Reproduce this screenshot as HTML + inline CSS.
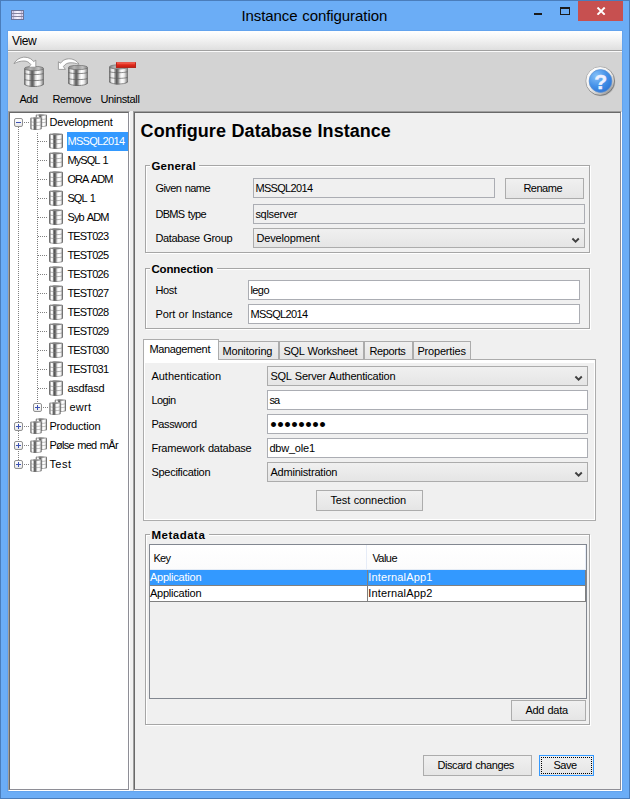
<!DOCTYPE html>
<html><head><meta charset="utf-8"><title>Instance configuration</title>
<style>
*{box-sizing:border-box;margin:0;padding:0}
html,body{width:630px;height:799px;overflow:hidden;background:#6badf6}
body{position:relative;font-family:"Liberation Sans",sans-serif;font-size:11px;color:#000;line-height:13px}
.a{position:absolute}
.t{position:absolute;white-space:nowrap;height:13px;line-height:13px}
.b{font-weight:bold}
/* window frame */
#frame{left:0;top:0;width:630px;height:799px;background:#6badf6;border:1px solid #4a7dbb}
#close{left:578px;top:1px;width:45px;height:20px;background:#c75050}
#client{left:8px;top:31px;width:614px;height:760px;background:#f0f0f0;outline:1px solid #62a3ee}
#menu{left:8px;top:31px;width:614px;height:19px;background:linear-gradient(#fff,#f4f4f4 40%,#dfdfdf)}
#menul1{left:8px;top:50px;width:614px;height:1px;background:#a0a0a0}
#menul2{left:8px;top:51px;width:614px;height:1px;background:#fafafa}
#tool{left:8px;top:52px;width:614px;height:59px;background:#d3d3d3}
/* panels */
.sunk{border-style:solid;border-width:1px;border-color:#a0a0a0 #fff #fff #a0a0a0}
.sunk>i{position:absolute;left:0;top:0;right:0;bottom:0;border-style:solid;border-width:1px;border-color:#696969 #8e8e96 #8e8e96 #696969}
#tree{left:8px;top:111px;width:122px;height:680px;background:#fff}
#right{left:133px;top:111px;width:489px;height:680px;background:#f0f0f0}
/* group boxes */
.gb{position:absolute;border:1px solid #a6a6a6}
/* fields */
.tx{position:absolute;height:20px;border:1px solid #abadb3;background:#fff;padding:3px 0 0 2px;white-space:nowrap;line-height:13px}
.ro{background:#f0f0f0}
.cb{position:absolute;height:20px;border:1px solid #acacac;background:linear-gradient(#f0f0f0,#e5e5e5);padding:3px 0 0 3px;white-space:nowrap;line-height:13px}
.cb svg{position:absolute;right:4px;top:8px}
.btn{position:absolute;height:21px;border:1px solid #acacac;background:linear-gradient(#f0f0f0,#e5e5e5);text-align:center;line-height:13px;padding-top:3px;white-space:nowrap}
.tab{position:absolute;top:341px;height:18px;border:1px solid #acacac;border-bottom:none;background:linear-gradient(#f0f0f0,#e5e5e5);text-align:center;line-height:13px;padding-top:3px;white-space:nowrap}
/* tree */
.hd{position:absolute;height:1px;background-image:linear-gradient(90deg,#808080 50%,transparent 50%);background-size:2px 1px}
.vd{position:absolute;width:1px;background-image:linear-gradient(#808080 50%,transparent 50%);background-size:1px 2px}
.pm{position:absolute;width:9px;height:9px;border:1px solid #919191;border-radius:2px;background:linear-gradient(#fff,#e8e8e8)}
.pm:before{content:"";position:absolute;left:1px;top:3px;width:5px;height:1px;background:#3d52b4}
.pm.p:after{content:"";position:absolute;left:3px;top:1px;width:1px;height:5px;background:#3d52b4}
</style></head><body>
<svg width="0" height="0" style="position:absolute"><defs>
<linearGradient id="cyl" x1="0" x2="1" y1="0" y2="0">
<stop offset="0" stop-color="#6a6a6a"/><stop offset="0.05" stop-color="#747474"/><stop offset="0.11" stop-color="#b4b4b4"/><stop offset="0.17" stop-color="#ffffff"/><stop offset="0.25" stop-color="#f2f2f2"/><stop offset="0.31" stop-color="#8e8e8e"/><stop offset="0.39" stop-color="#545454"/><stop offset="0.46" stop-color="#6e6e6e"/><stop offset="0.54" stop-color="#b4b4b4"/><stop offset="0.62" stop-color="#f4f4f4"/><stop offset="0.7" stop-color="#ffffff"/><stop offset="0.84" stop-color="#f2f2f2"/><stop offset="0.9" stop-color="#bcbcbc"/><stop offset="0.95" stop-color="#767676"/><stop offset="1" stop-color="#6a6a6a"/>
</linearGradient>
<linearGradient id="cyltop" x1="0" x2="0" y1="0" y2="1"><stop offset="0" stop-color="#9a9a9a"/><stop offset="1" stop-color="#787878"/></linearGradient>
<symbol id="db" viewBox="0 0 14 16">
<path d="M0 2 C0 0.9 0.8 0.7 1.5 0.5 H12.5 C13.2 0.7 14 0.9 14 2 V14 C14 15.2 11 16 7 16 C3 16 0 15.2 0 14 Z" fill="url(#cyl)"/>
<path d="M0.4 1.2 C2 0 12 0 13.6 1.2 C12 2.5 2 2.5 0.4 1.2 Z" fill="url(#cyltop)"/>
<path d="M1 5.9 C3 6.9 11 6.9 13 5.9 M1 9.9 C3 10.9 11 10.9 13 9.9" fill="none" stroke="#7c7c7c" stroke-width="0.8" opacity="0.7"/>
<path d="M0.5 13.6 C0.5 14.9 3.5 15.5 7 15.5 C10.5 15.5 13.5 14.9 13.5 13.6" fill="none" stroke="#7a7a7a" stroke-width="0.9" opacity="0.8"/>
</symbol>
<linearGradient id="lid" x1="0" x2="1" y1="0" y2="0"><stop offset="0" stop-color="#808080"/><stop offset="0.3" stop-color="#b4b4b4"/><stop offset="0.5" stop-color="#9a9a9a"/><stop offset="0.75" stop-color="#c4c4c4"/><stop offset="1" stop-color="#808080"/></linearGradient>
<linearGradient id="cylL" x1="0" x2="1" y1="0" y2="0"><stop offset="0" stop-color="#6c6c6c"/><stop offset="0.05" stop-color="#858585"/><stop offset="0.13" stop-color="#e2e2e2"/><stop offset="0.23" stop-color="#f6f6f6"/><stop offset="0.31" stop-color="#a2a2a2"/><stop offset="0.4" stop-color="#5a5a5a"/><stop offset="0.48" stop-color="#808080"/><stop offset="0.58" stop-color="#dedede"/><stop offset="0.68" stop-color="#ffffff"/><stop offset="0.8" stop-color="#ececec"/><stop offset="0.91" stop-color="#a6a6a6"/><stop offset="1" stop-color="#6c6c6c"/></linearGradient>
<symbol id="dbL" viewBox="0 0 20 21">
<path d="M0 2.6 V17.8 C0 19.7 4.5 21 10 21 C15.5 21 20 19.7 20 17.8 V2.6 Z" fill="url(#cylL)"/>
<ellipse cx="10" cy="2.5" rx="9.7" ry="2.2" fill="url(#lid)" stroke="#6c6c6c" stroke-width="0.7"/>
<path d="M0.6 7.6 C4 8.9 16 8.9 19.4 7.6 M0.6 13.6 C4 14.9 16 14.9 19.4 13.6" fill="none" stroke="#5e5e5e" stroke-width="0.9" opacity="0.8"/>
<path d="M0.5 17.6 C0.5 19.5 5 20.5 10 20.5 C15 20.5 19.5 19.5 19.5 17.6" fill="none" stroke="#6a6a6a" stroke-width="1" opacity="0.85"/>
</symbol>
<symbol id="dbs" viewBox="0 0 18 16">
<use href="#db" x="5.3" y="0" width="12" height="13"/>
<use href="#db" x="0" y="3" width="12" height="13"/>
</symbol>
</defs></svg>
<div class="a" id="frame"></div>
<div class="a" id="close"></div>
<div class="a" id="client"></div>
<div class="a" id="menu"></div><div class="a" id="menul1"></div><div class="a" id="menul2"></div>
<div class="a" id="tool"></div>

<!-- title icon -->
<svg class="a" style="left:11px;top:10px" width="13" height="10" viewBox="0 0 13 10"><defs><linearGradient id="ticon" x1="0" x2="1"><stop offset="0" stop-color="#cdc8ec"/><stop offset="0.5" stop-color="#f6f3ff"/><stop offset="1" stop-color="#d4cff0"/></linearGradient></defs><rect x="0" y="0" width="13" height="10" fill="#6b7499"/><rect x="1" y="1" width="11" height="8" fill="url(#ticon)"/><path d="M2.5 1V9M10.5 1V9" stroke="#a9a5c6" stroke-width="1" opacity="0.7"/><path d="M1 3.5H12M1 6.5H12" stroke="#85849f" stroke-width="1"/></svg>
<!-- caption buttons -->
<div class="a" style="left:534px;top:13px;width:8px;height:2px;background:#1b1b1b"></div>
<div class="a" style="left:560px;top:7px;width:10px;height:8px;border:1px solid #1b1b1b;border-top-width:2px"></div>
<svg class="a" style="left:596px;top:7px" width="10" height="8" viewBox="0 0 10 8"><path d="M1.5 0.5L8.7 7.7M8.7 0.5L1.5 7.7" stroke="#fff" stroke-width="1.9" fill="none"/></svg>
<!-- toolbar -->
<svg class="a" style="left:24px;top:66px" width="20" height="21"><use href="#dbL" width="20" height="21"/></svg>
<svg class="a" style="left:13px;top:56px" width="25" height="13" viewBox="0 0 25 13"><path d="M1 7.6 C3 3.5 8 1 12 1.2 C16 1.4 19 3 20.6 5.6 L22.8 4.2 L22.8 11.2 L15.8 11.2 L17.8 8.6 C16 6.2 14 5 11 5 C7 5 4 6 1 7.6 Z" fill="#fff" stroke="#8a8a8a" stroke-width="0.8"/></svg>
<svg class="a" style="left:68px;top:65px" width="20" height="21"><use href="#dbL" width="20" height="21"/></svg>
<svg class="a" style="left:57px;top:58px" width="25" height="13" viewBox="0 0 25 13"><path d="M22 6.4 C20 2.3 15 0.6 11.5 0.8 C8 1 5.2 2.6 3.6 5.2 L1.4 3.8 L1.4 11.4 L8.4 11.4 L6.4 8.6 C8 6.2 10 5 13 4.8 C16 4.6 19 5.2 22 6.4 Z" fill="#fff" stroke="#8a8a8a" stroke-width="0.8"/></svg>
<svg class="a" style="left:109px;top:64px" width="19" height="21"><use href="#dbL" width="19" height="21"/></svg>
<div class="a" style="left:116px;top:62px;width:20px;height:6px;background:linear-gradient(#f4604f,#e02a1c 45%,#c91f13);border:1px solid #b3261b;border-top-color:#e8574a"></div>
<!-- help -->
<svg class="a" style="left:584px;top:64px" width="33" height="34" viewBox="0 0 33 34"><defs>
<radialGradient id="hb" cx="0.32" cy="0.28" r="0.85"><stop offset="0" stop-color="#86c0f8"/><stop offset="0.55" stop-color="#4290e8"/><stop offset="1" stop-color="#2a6fd2"/></radialGradient>
<linearGradient id="hr" x1="0.15" y1="0.1" x2="0.85" y2="0.95"><stop offset="0" stop-color="#ffffff"/><stop offset="0.5" stop-color="#ececec"/><stop offset="0.8" stop-color="#bdbdbd"/><stop offset="1" stop-color="#858585"/></linearGradient>
<linearGradient id="hs" x1="0.15" y1="0.1" x2="0.85" y2="0.95"><stop offset="0" stop-color="#b4b4b4"/><stop offset="1" stop-color="#6e6e6e"/></linearGradient></defs>
<circle cx="17" cy="18" r="14.3" fill="#000" opacity="0.10"/>
<circle cx="16.2" cy="17" r="14.4" fill="url(#hr)" stroke="url(#hs)" stroke-width="0.9"/>
<circle cx="16.5" cy="17" r="11.4" fill="url(#hb)" stroke="#5b8fd0" stroke-width="0.7"/>
<text x="16.6" y="24.6" text-anchor="middle" font-family="Liberation Sans, sans-serif" font-weight="bold" font-size="21" fill="#eef0ff" stroke="#eef0ff" stroke-width="0.5">?</text></svg>
<div class="a sunk" id="tree"><i></i></div>
<div class="a sunk" id="right"><i></i></div>
<div class="t" style="left:241.40px;top:7px;font-size:15px;height:17px;line-height:17px;letter-spacing:-0.07px;word-spacing:0.60px;">Instance configuration</div>
<div class="t" style="left:12.00px;top:34px;font-size:12px;height:14px;line-height:14px;letter-spacing:-0.38px;">View</div>
<div class="t" style="left:19.40px;top:93px;letter-spacing:-0.48px;">Add</div>
<div class="t" style="left:52.40px;top:93px;letter-spacing:-0.37px;">Remove</div>
<div class="t" style="left:100.40px;top:93px;letter-spacing:-0.34px;">Uninstall</div>
<div class="vd" style="left:18px;top:127px;height:338px"></div>
<div class="vd" style="left:37px;top:133px;height:270px"></div>
<div class="hd" style="left:24px;top:122px;width:6px"></div>
<div class="pm" style="left:14px;top:118px"></div>
<svg class="a" style="left:30px;top:114px" width="18" height="16"><use href="#dbs" width="18" height="16"/></svg>
<div class="t" style="left:49.40px;top:116px;letter-spacing:-0.13px;">Development</div>
<div class="hd" style="left:38px;top:141px;width:10px"></div>
<svg class="a" style="left:49px;top:133px" width="14" height="16"><use href="#db" width="14" height="16"/></svg>
<div class="a" style="left:67px;top:132px;width:61px;height:19px;background:#3399ff"></div>
<div class="t" style="left:67.40px;top:135px;letter-spacing:-0.67px;color:#fff;">MSSQL2014</div>
<div class="hd" style="left:38px;top:160px;width:10px"></div>
<svg class="a" style="left:49px;top:152px" width="14" height="16"><use href="#db" width="14" height="16"/></svg>
<div class="t" style="left:67.40px;top:154px;letter-spacing:-0.90px;word-spacing:1.29px;">MySQL 1</div>
<div class="hd" style="left:38px;top:179px;width:10px"></div>
<svg class="a" style="left:49px;top:171px" width="14" height="16"><use href="#db" width="14" height="16"/></svg>
<div class="t" style="left:67.40px;top:173px;letter-spacing:-0.90px;word-spacing:1.29px;">ORA ADM</div>
<div class="hd" style="left:38px;top:198px;width:10px"></div>
<svg class="a" style="left:49px;top:190px" width="14" height="16"><use href="#db" width="14" height="16"/></svg>
<div class="t" style="left:67.40px;top:192px;letter-spacing:-0.90px;word-spacing:1.29px;">SQL 1</div>
<div class="hd" style="left:38px;top:217px;width:10px"></div>
<svg class="a" style="left:49px;top:209px" width="14" height="16"><use href="#db" width="14" height="16"/></svg>
<div class="t" style="left:67.40px;top:211px;letter-spacing:-0.84px;word-spacing:1.22px;">Syb ADM</div>
<div class="hd" style="left:38px;top:236px;width:10px"></div>
<svg class="a" style="left:49px;top:228px" width="14" height="16"><use href="#db" width="14" height="16"/></svg>
<div class="t" style="left:67.40px;top:230px;letter-spacing:-0.81px;">TEST023</div>
<div class="hd" style="left:38px;top:255px;width:10px"></div>
<svg class="a" style="left:49px;top:247px" width="14" height="16"><use href="#db" width="14" height="16"/></svg>
<div class="t" style="left:67.40px;top:249px;letter-spacing:-0.81px;">TEST025</div>
<div class="hd" style="left:38px;top:274px;width:10px"></div>
<svg class="a" style="left:49px;top:266px" width="14" height="16"><use href="#db" width="14" height="16"/></svg>
<div class="t" style="left:67.40px;top:268px;letter-spacing:-0.81px;">TEST026</div>
<div class="hd" style="left:38px;top:293px;width:10px"></div>
<svg class="a" style="left:49px;top:285px" width="14" height="16"><use href="#db" width="14" height="16"/></svg>
<div class="t" style="left:67.40px;top:287px;letter-spacing:-0.81px;">TEST027</div>
<div class="hd" style="left:38px;top:312px;width:10px"></div>
<svg class="a" style="left:49px;top:304px" width="14" height="16"><use href="#db" width="14" height="16"/></svg>
<div class="t" style="left:67.40px;top:306px;letter-spacing:-0.81px;">TEST028</div>
<div class="hd" style="left:38px;top:331px;width:10px"></div>
<svg class="a" style="left:49px;top:323px" width="14" height="16"><use href="#db" width="14" height="16"/></svg>
<div class="t" style="left:67.40px;top:325px;letter-spacing:-0.81px;">TEST029</div>
<div class="hd" style="left:38px;top:350px;width:10px"></div>
<svg class="a" style="left:49px;top:342px" width="14" height="16"><use href="#db" width="14" height="16"/></svg>
<div class="t" style="left:67.40px;top:344px;letter-spacing:-0.81px;">TEST030</div>
<div class="hd" style="left:38px;top:369px;width:10px"></div>
<svg class="a" style="left:49px;top:361px" width="14" height="16"><use href="#db" width="14" height="16"/></svg>
<div class="t" style="left:67.40px;top:363px;letter-spacing:-0.81px;">TEST031</div>
<div class="hd" style="left:38px;top:388px;width:10px"></div>
<svg class="a" style="left:49px;top:380px" width="14" height="16"><use href="#db" width="14" height="16"/></svg>
<div class="t" style="left:67.40px;top:382px;letter-spacing:-0.23px;">asdfasd</div>
<div class="hd" style="left:43px;top:407px;width:6px"></div>
<div class="pm p" style="left:33px;top:403px"></div>
<svg class="a" style="left:49px;top:399px" width="18" height="16"><use href="#dbs" width="18" height="16"/></svg>
<div class="t" style="left:69.40px;top:401px;letter-spacing:0.26px;">ewrt</div>
<div class="hd" style="left:24px;top:426px;width:6px"></div>
<div class="pm p" style="left:14px;top:422px"></div>
<svg class="a" style="left:30px;top:418px" width="18" height="16"><use href="#dbs" width="18" height="16"/></svg>
<div class="t" style="left:49.40px;top:420px;letter-spacing:-0.16px;">Production</div>
<div class="hd" style="left:24px;top:445px;width:6px"></div>
<div class="pm p" style="left:14px;top:441px"></div>
<svg class="a" style="left:30px;top:437px" width="18" height="16"><use href="#dbs" width="18" height="16"/></svg>
<div class="t" style="left:49.40px;top:439px;letter-spacing:-0.74px;word-spacing:1.12px;">Pølse med mÅr</div>
<div class="hd" style="left:24px;top:464px;width:6px"></div>
<div class="pm p" style="left:14px;top:460px"></div>
<svg class="a" style="left:30px;top:456px" width="18" height="16"><use href="#dbs" width="18" height="16"/></svg>
<div class="t" style="left:49.40px;top:458px;letter-spacing:0.46px;">Test</div>
<div class="t b" style="left:140.60px;top:121px;font-size:18px;height:20px;line-height:20px;letter-spacing:0.04px;word-spacing:0.59px;">Configure Database Instance</div>
<div class="gb" style="left:146px;top:166px;width:445px;height:88px;border-color:#fff"></div><div class="gb" style="left:145px;top:165px;width:445px;height:88px"></div><div class="a" style="left:150px;top:159px;width:49px;height:13px;background:#f0f0f0"></div><div class="t b" style="left:151.40px;top:160px;font-size:11.5px;height:13.5px;line-height:13.5px;letter-spacing:0.23px;">General</div>
<div class="t" style="left:155.40px;top:182px;letter-spacing:-0.57px;word-spacing:0.96px;">Given name</div>
<div class="t" style="left:155.40px;top:208px;letter-spacing:-0.70px;word-spacing:1.08px;">DBMS type</div>
<div class="t" style="left:155.40px;top:232px;letter-spacing:-0.33px;word-spacing:0.72px;">Database Group</div>
<div class="tx ro" style="left:253px;top:178px;width:242px"></div><div class="t" style="left:255.40px;top:182px;letter-spacing:-0.67px;">MSSQL2014</div>
<div class="btn" style="left:505px;top:178px;width:79px"></div><div class="t" style="left:523.40px;top:182px;letter-spacing:-0.49px;">Rename</div>
<div class="tx ro" style="left:253px;top:204px;width:332px"></div><div class="t" style="left:255.40px;top:208px;letter-spacing:-0.31px;">sqlserver</div>
<div class="cb" style="left:253px;top:228px;width:332px"><svg width="9" height="7" viewBox="0 0 9 7"><path d="M1.4 1.5L4.6 4.7L7.8 1.5" fill="none" stroke="#404040" stroke-width="1.9"/></svg></div><div class="t" style="left:256.40px;top:232px;letter-spacing:-0.13px;">Development</div>
<div class="gb" style="left:146px;top:269px;width:445px;height:61px;border-color:#fff"></div><div class="gb" style="left:145px;top:268px;width:445px;height:61px"></div><div class="a" style="left:150px;top:262px;width:67px;height:13px;background:#f0f0f0"></div><div class="t b" style="left:151.40px;top:263px;font-size:11.5px;height:13.5px;line-height:13.5px;letter-spacing:-0.14px;">Connection</div>
<div class="t" style="left:155.40px;top:284px;letter-spacing:-0.35px;">Host</div>
<div class="t" style="left:155.40px;top:308px;letter-spacing:-0.10px;word-spacing:0.49px;">Port or Instance</div>
<div class="tx" style="left:248px;top:280px;width:332px"></div><div class="t" style="left:250.40px;top:284px;letter-spacing:-0.56px;">lego</div>
<div class="tx" style="left:248px;top:304px;width:332px"></div><div class="t" style="left:250.40px;top:308px;letter-spacing:-0.67px;">MSSQL2014</div>
<div class="a" style="left:143px;top:359px;width:453px;height:162px;border:1px solid #acacac;background:#fff"></div>
<div class="a" style="left:145px;top:363px;width:449px;height:156px;background:#f0f0f0"></div>
<div class="tab" style="left:218px;width:61px"></div><div class="t" style="left:222.40px;top:345px;letter-spacing:-0.14px;">Monitoring</div>
<div class="tab" style="left:279px;width:85px"></div><div class="t" style="left:283.40px;top:345px;letter-spacing:-0.30px;word-spacing:0.68px;">SQL Worksheet</div>
<div class="tab" style="left:364px;width:49px"></div><div class="t" style="left:369.40px;top:345px;letter-spacing:-0.34px;">Reports</div>
<div class="tab" style="left:413px;width:58px"></div><div class="t" style="left:417.40px;top:345px;letter-spacing:-0.18px;">Properties</div>
<div class="a" style="left:143px;top:339px;width:76px;height:21px;border:1px solid #acacac;border-bottom:none;background:#fff"></div><div class="t" style="left:149.40px;top:343px;letter-spacing:-0.35px;">Management</div>
<div class="t" style="left:151.40px;top:370px;">Authentication</div>
<div class="t" style="left:151.40px;top:394px;letter-spacing:-0.57px;">Login</div>
<div class="t" style="left:151.40px;top:418px;letter-spacing:-0.37px;">Password</div>
<div class="t" style="left:151.40px;top:442px;letter-spacing:-0.21px;word-spacing:0.59px;">Framework database</div>
<div class="t" style="left:151.40px;top:466px;letter-spacing:-0.27px;">Specification</div>
<div class="cb" style="left:267px;top:366px;width:321px"><svg width="9" height="7" viewBox="0 0 9 7"><path d="M1.4 1.5L4.6 4.7L7.8 1.5" fill="none" stroke="#404040" stroke-width="1.9"/></svg></div><div class="t" style="left:270.40px;top:370px;letter-spacing:-0.22px;word-spacing:0.61px;">SQL Server Authentication</div>
<div class="tx" style="left:267px;top:390px;width:321px"></div><div class="t" style="left:269.40px;top:394px;letter-spacing:-0.90px;">sa</div>
<div class="tx" style="left:267px;top:414px;width:321px"></div>
<div class="a" style="left:270.2px;top:415px;font-size:18.5px;letter-spacing:0.52px;line-height:20px;height:20px;white-space:nowrap">••••••••</div>
<div class="tx" style="left:267px;top:438px;width:321px"></div><div class="t" style="left:269.40px;top:442px;letter-spacing:-0.21px;">dbw_ole1</div>
<div class="cb" style="left:267px;top:462px;width:321px"><svg width="9" height="7" viewBox="0 0 9 7"><path d="M1.4 1.5L4.6 4.7L7.8 1.5" fill="none" stroke="#404040" stroke-width="1.9"/></svg></div><div class="t" style="left:270.40px;top:466px;letter-spacing:-0.20px;">Administration</div>
<div class="btn" style="left:316px;top:490px;width:107px"></div><div class="t" style="left:330.40px;top:494px;letter-spacing:-0.09px;word-spacing:0.48px;">Test connection</div>
<div class="gb" style="left:146px;top:535px;width:445px;height:191px;border-color:#fff"></div><div class="gb" style="left:145px;top:534px;width:445px;height:191px"></div><div class="a" style="left:150px;top:528px;width:59px;height:13px;background:#f0f0f0"></div><div class="t b" style="left:151.40px;top:529px;font-size:11.5px;height:13.5px;line-height:13.5px;letter-spacing:0.51px;">Metadata</div>
<div class="a" style="left:149px;top:544px;width:438px;height:155px;border:1px solid #828790;background:#f0f0f0"></div>
<div class="a" style="left:150px;top:545px;width:436px;height:25px;background:linear-gradient(#fff,#fbfbfc)"></div>
<div class="a" style="left:366px;top:545px;width:1px;height:24px;background:#e6ecf7"></div>
<div class="a" style="left:585px;top:545px;width:1px;height:24px;background:#e6ecf7"></div>
<div class="a" style="left:150px;top:569px;width:436px;height:1px;background:#e6ecf5"></div>
<div class="t" style="left:153.40px;top:552px;letter-spacing:-0.73px;">Key</div><div class="t" style="left:372.40px;top:552px;letter-spacing:-0.55px;">Value</div>
<div class="a" style="left:150px;top:570px;width:436px;height:32px;background:#fff"></div>
<div class="a" style="left:150px;top:570px;width:435px;height:15px;background:#3399ff"></div>
<div class="a" style="left:150px;top:585px;width:436px;height:1px;background:#808080"></div>
<div class="a" style="left:150px;top:601px;width:436px;height:1px;background:#808080"></div>
<div class="a" style="left:367px;top:570px;width:1px;height:32px;background:#808080"></div>
<div class="a" style="left:585px;top:570px;width:1px;height:32px;background:#808080"></div>
<div class="t" style="left:149.90px;top:571px;letter-spacing:-0.22px;color:#fff;">Application</div><div class="t" style="left:368.20px;top:571px;letter-spacing:0.16px;color:#fff;">InternalApp1</div>
<div class="t" style="left:149.90px;top:587px;letter-spacing:-0.22px;">Application</div><div class="t" style="left:368.20px;top:587px;letter-spacing:0.16px;">InternalApp2</div>
<div class="btn" style="left:511px;top:700px;width:75px"></div><div class="t" style="left:525.40px;top:704px;letter-spacing:-0.30px;word-spacing:0.69px;">Add data</div>
<div class="btn" style="left:423px;top:755px;width:109px"></div><div class="t" style="left:437.40px;top:759px;letter-spacing:-0.41px;word-spacing:0.79px;">Discard changes</div>
<div class="btn" style="left:539px;top:755px;width:55px;border-color:#3399ff"><div class="a" style="left:1px;top:1px;right:1px;bottom:1px;border:1px dotted #000"></div></div><div class="t" style="left:553.40px;top:759px;letter-spacing:-0.48px;">Save</div>
</body></html>
